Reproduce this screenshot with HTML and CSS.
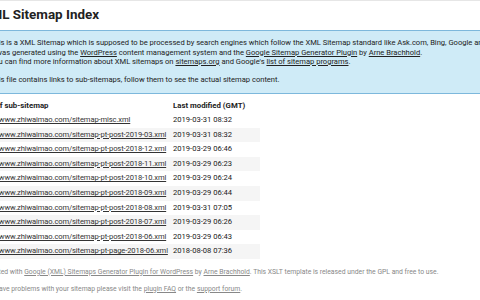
FILE: index.html
```html
<!DOCTYPE html>
<html lang="en">
  <head>
    <meta charset="UTF-8" />
    <meta name="viewport" content="width=device-width, initial-scale=1.0" />
    <title>XML Sitemap Index</title>
    <link rel="stylesheet" href="styles.css">
  </head>
  <body>
    <div class="page">
      <h1 class="title">XML Sitemap Index</h1>

      <div class="intro">
        <p>
          This is a XML Sitemap which is supposed to be processed by search engines which follow the XML Sitemap standard like Ask.com, Bing, Google and Yahoo.<br />
          It was generated using the <a href="#">WordPress</a> content management system and the <a href="#">Google Sitemap Generator Plugin</a> by <a href="#">Arne Brachhold</a>.<br />
          You can find more information about XML sitemaps on <a href="#">sitemaps.org</a> and Google's <a href="#">list of sitemap programs</a>.
        </p>
        <p>This file contains links to sub-sitemaps, follow them to see the actual sitemap content.</p>
      </div>

      <table class="sitemaps">
        <thead>
          <tr>
            <th class="col-url">URL of sub-sitemap</th>
            <th class="col-date">Last modified (GMT)</th>
          </tr>
        </thead>
        <tbody>
          <tr>
            <td><a href="#">http://www.zhiwaimao.com/sitemap-misc.xml</a></td>
            <td>2019-03-31 08:32</td>
          </tr>
          <tr class="high">
            <td><a href="#">http://www.zhiwaimao.com/sitemap-pt-post-2019-03.xml</a></td>
            <td>2019-03-31 08:32</td>
          </tr>
          <tr>
            <td><a href="#">http://www.zhiwaimao.com/sitemap-pt-post-2018-12.xml</a></td>
            <td>2019-03-29 06:46</td>
          </tr>
          <tr class="high">
            <td><a href="#">http://www.zhiwaimao.com/sitemap-pt-post-2018-11.xml</a></td>
            <td>2019-03-29 06:23</td>
          </tr>
          <tr>
            <td><a href="#">http://www.zhiwaimao.com/sitemap-pt-post-2018-10.xml</a></td>
            <td>2019-03-29 06:24</td>
          </tr>
          <tr class="high">
            <td><a href="#">http://www.zhiwaimao.com/sitemap-pt-post-2018-09.xml</a></td>
            <td>2019-03-29 06:44</td>
          </tr>
          <tr>
            <td><a href="#">http://www.zhiwaimao.com/sitemap-pt-post-2018-08.xml</a></td>
            <td>2019-03-31 07:05</td>
          </tr>
          <tr class="high">
            <td><a href="#">http://www.zhiwaimao.com/sitemap-pt-post-2018-07.xml</a></td>
            <td>2019-03-29 06:26</td>
          </tr>
          <tr>
            <td><a href="#">http://www.zhiwaimao.com/sitemap-pt-post-2018-06.xml</a></td>
            <td>2019-03-29 06:43</td>
          </tr>
          <tr class="high">
            <td><a href="#">http://www.zhiwaimao.com/sitemap-pt-page-2018-06.xml</a></td>
            <td>2018-08-08 07:36</td>
          </tr>
        </tbody>
      </table>

      <div class="footer">
        <p>Generated with <a href="#">Google (XML) Sitemaps Generator Plugin for WordPress</a> by <a href="#">Arne Brachhold</a>. This XSLT template is released under the GPL and free to use.</p>
        <p>If you have problems with your sitemap please visit the <a href="#">plugin FAQ</a> or the <a href="#">support forum</a>.</p>
      </div>
    </div>
  </body>
</html>
```

FILE: styles.css
```css
html,
body {
  margin: 0;
  overflow: hidden;
}
body {
  font-family: Roboto, "Liberation Sans", sans-serif;
  color: #222;
  background: #fff;
  border-top: 1px solid #e6e6e6;
}
a {
  color: #222;
}

/* page is scrolled a bit to the right */
.page {
  margin-left: -21px;
  white-space: nowrap;
}

.title {
  margin: 0;
  padding-top: 6px;
  margin-left: 3px;
  font-size: 13.4px;
  line-height: 16px;
  font-weight: 700;
}

/* intro box */
.intro {
  margin: 7px -10px 0 0;
  padding: 7px 0 8px 10px;
  background-color: #cfebf7;
  border: 1px solid #7db8dc;
  font-size: 7.6px;
  line-height: 9.5px;
  letter-spacing: -0.02px;
}
.intro p {
  margin: 0;
}
.intro p + p {
  margin-top: 8.5px;
}

/* sub-sitemaps table */
.sitemaps {
  margin-top: 5px;
  border-collapse: collapse;
  border-spacing: 0;
  font-size: 7.6px;
}
.sitemaps th,
.sitemaps td {
  padding: 0;
  height: 14.6px;
  line-height: 14.6px;
  text-align: left;
}
.sitemaps th {
  font-size: 7.8px;
  font-weight: 700;
}
.sitemaps td a {
  color: #333;
  letter-spacing: -0.12px;
}
.sitemaps .col-url {
  width: 194px;
}
.sitemaps .col-date {
  width: 87px;
}
.sitemaps tr.high td {
  background-color: #f5f5f5;
}

.footer {
  margin: 7.6px 0 0 -2px;
  font-size: 6.8px;
  line-height: 10px;
  color: #888;
}
.footer p {
  margin: 0;
}
.footer p + p {
  margin-top: 7px;
}
.footer a {
  color: #888;
}
```
